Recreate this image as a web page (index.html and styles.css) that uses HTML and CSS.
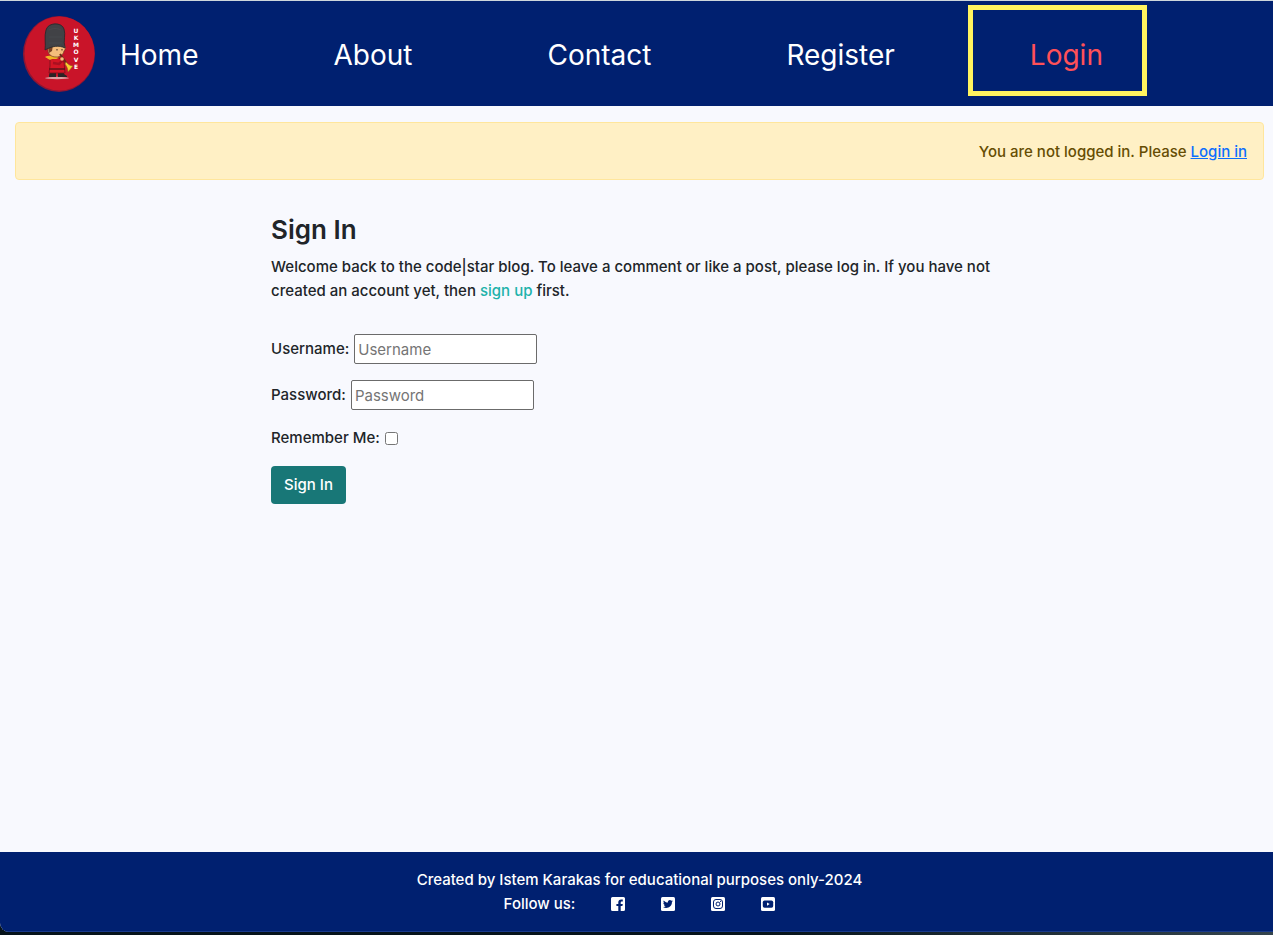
FILE: index.html
```html
<!DOCTYPE html>
<html lang="en">
<head>
<meta charset="utf-8">
<meta name="viewport" content="width=device-width, initial-scale=1">
<title>Sign In</title>
<link rel="stylesheet" href="styles.css">
</head>
<body>
<div class="page">
  <header class="site-header">
    <a class="brand" href="#" aria-label="UK Move home">
      <svg class="logo" viewBox="0 0 72 76" aria-hidden="true">
        <ellipse cx="36" cy="38" rx="36" ry="38" fill="#8c1634"/>
        <ellipse cx="36.500" cy="37.500" rx="35" ry="37" fill="#c91429"/>
        <ellipse cx="34" cy="62" rx="12" ry="1.200" fill="#d9a3a3"/>
        <path d="M27 56h6v5h-7v-2zM35 56h6v2l3 2v1h-9z" fill="#292425"/>
        <path d="M27 43l9-1 5 4 1 11H26l1-7z" fill="#d51625" stroke="#76131d" stroke-width=".8"/>
        <path d="M26 53h16" stroke="#5b1419" stroke-width="1.500"/>
        <path d="M22 41c4-2 9-1 12 0l2 1c-4 2-7 0-9 2z" fill="#f0b323"/>
        <path d="M25 29h15c3 1 3 4 1 6-1 4-4 6-8 6-5 0-8-3-8-7z" fill="#f4bd7b" stroke="#713d22" stroke-width=".7"/>
        <path d="M25 29h5l-1 6-3 2z" fill="#784222"/>
        <path d="M34 33v1.500M39 33v1.500" stroke="#36221b"/>
        <path d="M22 34c1-6-1-14 1-20 2-8 16-8 18-1 2 6-1 11 1 19-6-3-13-2-20 2z" fill="#414246" stroke="#25272a" stroke-width=".8"/>
        <path d="M26 14c4-2 8-2 12 0M26 21h13M26 27h13" stroke="#4c4d52" stroke-width=".6" fill="none"/>
        <path d="M37 38l7 10" stroke="#6b2c17" stroke-width="2"/>
        <path d="M30 47l6 1 4-4" stroke="#a91020" stroke-width="2.500" fill="none"/>
        <circle cx="39" cy="43" r="1.800" fill="#f4bd7b"/>
        <path d="M43 46c2 2 4 4 7 4l-5 6c0-3-1-5-3-8z" fill="#f8cf31" stroke="#94601f" stroke-width=".6"/>
        <g class="logo-text"><text x="53" y="17">U</text><text x="53" y="24">K</text><text x="53" y="31">M</text><text x="53" y="38">O</text><text x="53" y="46">V</text><text x="53" y="53">E</text></g>
      </svg>
    </a>
    <nav class="site-nav" aria-label="Main">
      <a href="#">Home</a>
      <a href="#">About</a>
      <a href="#">Contact</a>
      <a href="#">Register</a>
      <a class="current" href="#" aria-current="page">Login</a>
    </nav>
  </header>

  <main class="content">
    <div class="alert" role="status">You are not logged in. Please <a href="#">Login in</a></div>
    <section class="sign-in">
      <h1>Sign In</h1>
      <p class="intro">Welcome back to the code|star blog. To leave a comment or like a post, please log in. If you have not created an account yet, then <a href="#">sign up</a> first.</p>
      <form class="form">
        <div class="field"><label for="username">Username:</label><input id="username" type="text" placeholder="Username"></div>
        <div class="field"><label for="password">Password:</label><input id="password" type="password" placeholder="Password"></div>
        <div class="field"><label for="remember">Remember Me:</label><input id="remember" type="checkbox"></div>
        <button class="button" type="submit">Sign In</button>
      </form>
    </section>
  </main>

  <footer class="site-footer">
    <p>Created by Istem Karakas for educational purposes only-2024</p>
    <div class="social">
      <span>Follow us:</span>
      <a href="#" aria-label="Facebook"><svg viewBox="0 0 14 14"><path fill="#fff" fill-rule="evenodd" d="M1.500 0h11A1.500 1.500 0 0 1 14 1.500v11a1.500 1.500 0 0 1-1.500 1.500H9.700V9h1.700l.4-2H9.700V5.700c0-.8.400-1.200 1.200-1.200h.9V2.600c-3-.6-4.500.4-4.500 2.700V7H5.400v2h1.900v5H1.500A1.500 1.500 0 0 1 0 12.500v-11A1.500 1.500 0 0 1 1.500 0z"/></svg></a>
      <a href="#" aria-label="Twitter"><svg viewBox="0 0 14 14"><rect width="14" height="14" rx="1.500" fill="#fff"/><path fill="#002070" d="M11.900 4.200a4 4 0 0 1-1 1.100c.2 4.100-4.700 7.300-8.900 4.800 1 .1 2-.2 2.900-.8-.9 0-1.600-.6-1.900-1.400h.9C3 7.700 2.400 6.900 2.400 5.900l.9.200c-.9-.6-1.100-1.800-.6-2.700 1.100 1.300 2.500 2 4.200 2.100-.4-2.100 2-3.200 3.500-1.800l1.300-.5-.9 1.200z"/></svg></a>
      <a href="#" aria-label="Instagram"><svg viewBox="0 0 14 14"><rect width="14" height="14" rx="1.500" fill="#fff"/><rect x="2.500" y="2.500" width="9" height="9" rx="2.500" fill="none" stroke="#002070"/><circle cx="7" cy="7" r="2" fill="none" stroke="#002070"/><circle cx="9.600" cy="4.400" r=".6" fill="#002070"/></svg></a>
      <a href="#" aria-label="YouTube"><svg viewBox="0 0 14 14"><rect width="14" height="14" rx="1.500" fill="#fff"/><rect x="1.800" y="3.500" width="10.400" height="7.200" rx="1.700" fill="#002070"/><path d="M6 5.500v3.200L8.700 7z" fill="#fff"/></svg></a>
    </div>
  </footer>
</div>
</body>
</html>
```
FILE: styles.css
```css
*, *::before, *::after { box-sizing: border-box; }
body {
  margin: 0;
  background: linear-gradient(90deg, #06131a 60%, #34444d);
  color: #212529;
  font: 500 15px/24px Inter, "Liberation Sans", sans-serif;
}
h1, p { margin: 0; }
.page {
  display: flex;
  flex-direction: column;
  min-height: calc(100vh - 3px);
  margin-bottom: 3px;
  border-top: 1px solid #cdd6dc;
  border-bottom-left-radius: 9px;
  background: #f8f9fe;
  overflow: hidden;
}
.site-header {
  display: flex;
  align-items: center;
  gap: 25px;
  padding: 15px 23px 14px;
  background: #002070;
}
.logo { display: block; width: 72px; height: 76px; }
.logo-text { fill: #fff; font: bold 6px "DejaVu Sans", sans-serif; text-anchor: middle; }
.site-nav { display: flex; gap: 135px; padding-top: 2px; }
.site-nav a {
  color: #fff;
  font-size: 28px;
  font-weight: 400;
  line-height: 44px;
  text-decoration: none;
}
.site-nav .current { position: relative; color: #ff5058; }
.current::after {
  content: "";
  position: absolute;
  inset: -28px -44px -19px -62px;
  border: 5px solid #fff45f;
}
.content { flex: 1; padding: 16px 9px 24px 15px; }
.alert {
  padding: 17px 16px 15px;
  border: 1px solid #ffe69c;
  border-radius: 4px;
  background: #fff0c5;
  color: #664d03;
  text-align: right;
}
.alert a { color: #0d6efd; }
.sign-in { width: 59%; margin: 33px auto 0; }
h1 { margin-bottom: 8px; font-size: 26px; line-height: 34px; font-weight: 600; }
.intro a { color: #20b2aa; text-decoration: none; }
.form { display: grid; justify-items: start; gap: 16px; margin-top: 31px; }
.field { display: flex; align-items: center; gap: 5px; }
input { font: inherit; }
input[type="text"], input[type="password"] {
  width: 183px;
  height: 30px;
  padding: 1px 3px;
  border: 1px solid #6b6b6b;
  border-radius: 2px;
  background: #fff;
  font-weight: 400;
}
input::placeholder { color: #757575; }
input[type="checkbox"] { width: 13px; height: 13px; margin: 0; }
.button {
  padding: 7px 13px;
  border: 0;
  border-radius: 4px;
  background: #187777;
  color: #fff;
  font: inherit;
}
.site-footer {
  padding: 16px 9px 15px 15px;
  border-bottom: 1px solid #18398a;
  background: #002070;
  color: #fff;
  text-align: center;
}
.social { display: flex; justify-content: center; align-items: center; gap: 36px; }
.social svg { display: block; width: 14px; height: 14px; }
```
